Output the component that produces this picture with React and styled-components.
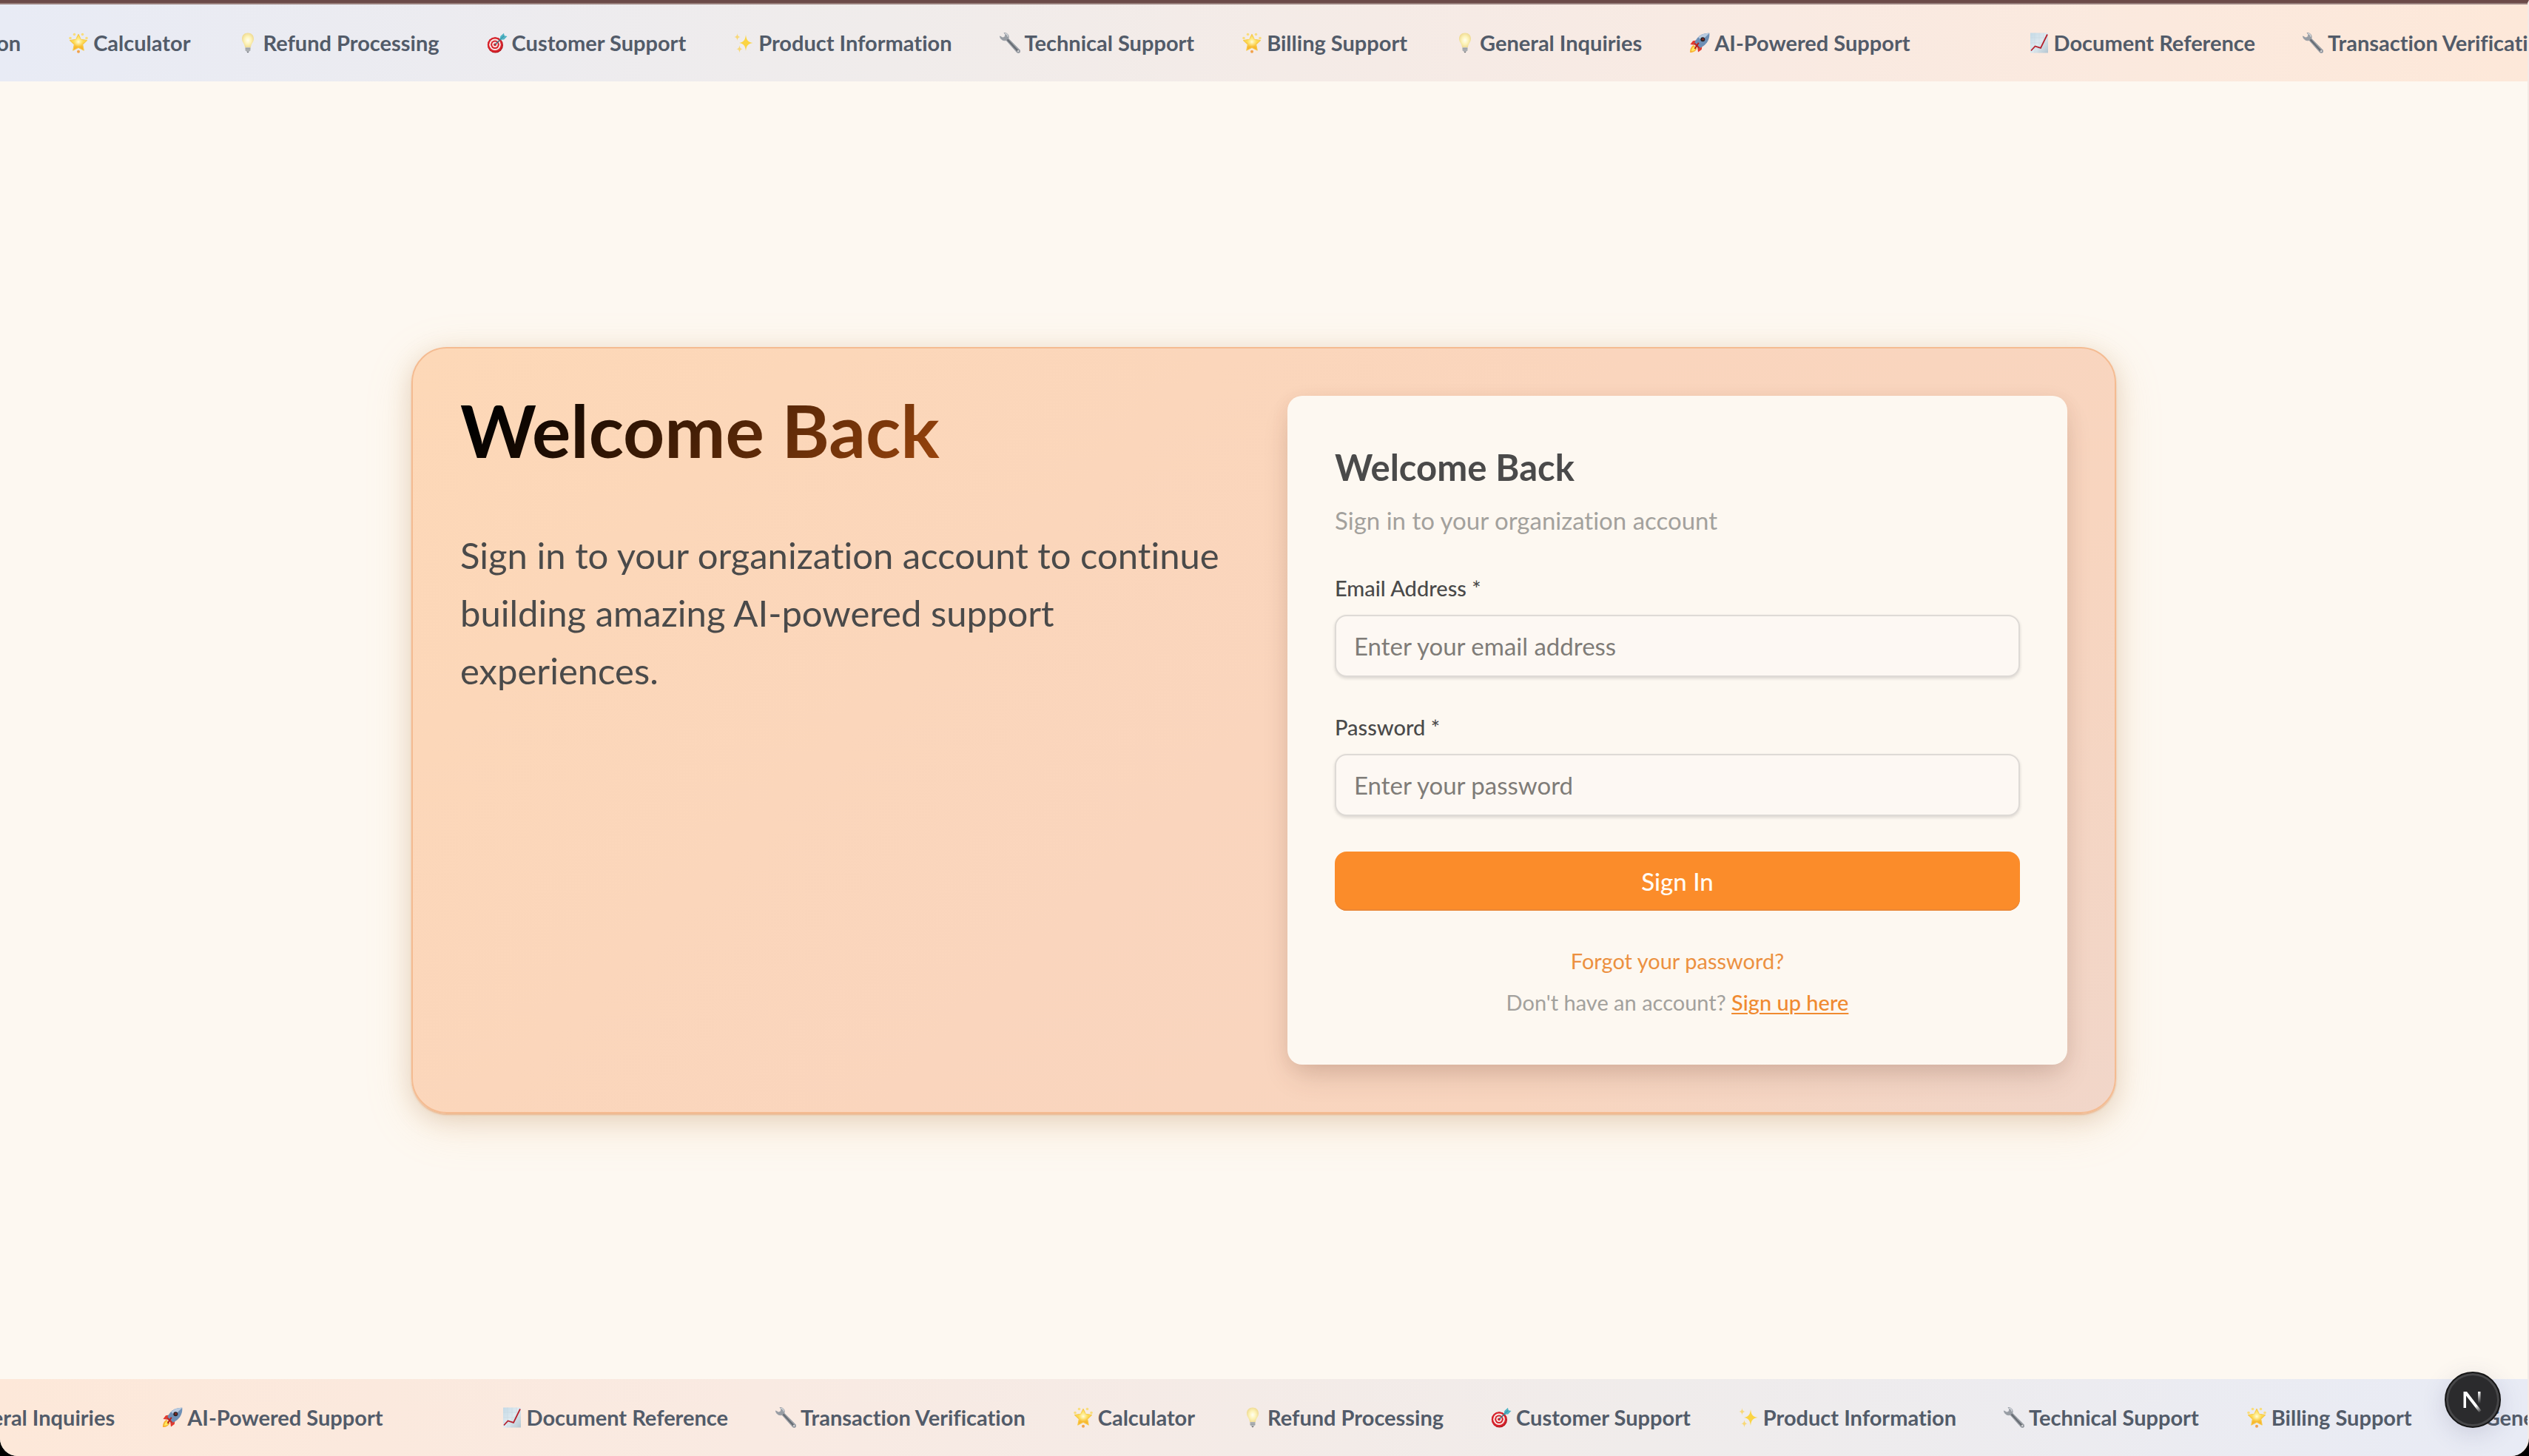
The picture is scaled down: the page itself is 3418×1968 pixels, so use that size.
import React from "react";
import styled, { createGlobalStyle } from "styled-components";

const GlobalStyle = createGlobalStyle`
  *, *::before, *::after { box-sizing: border-box; }
  html { background: #000; }
  body {
    margin: 0;
    background: #000;
    font-family: Lato, "Noto Sans", sans-serif;
    font-variant-ligatures: none;
  }
  h1, h2, p { margin: 0; }
`;

const Page = styled.div`
  min-height: 100vh;
  display: flex;
  flex-direction: column;
  overflow: hidden;
  background: #fdf8f1;
  border-top: 4px solid #6b4a48;
  border-right: 2px solid #f3ebe6;
  border-radius: 0 0 24px 24px;
`;

const TopRule = styled.div`
  height: 2px;
  background: #98807c;
`;

/* ---------- marquee ---------- */

const Marquee = styled.section`
  display: flex;
  overflow: hidden;
  padding: 32px 0;
  background: linear-gradient(${(p) => (p.$reverse ? "270deg" : "90deg")}, #e8ebf5 0%, #f0eceb 35%, #f9eae2 70%, #fde8d9 100%);
`;

const Track = styled.div`
  display: flex;
  flex: none;
  transform: translateX(-${(p) => p.$shift}px);
`;

const Group = styled.ul`
  display: flex;
  flex: none;
  gap: 64px;
  margin: 0;
  padding: 0 160px 0 0;
  list-style: none;
`;

const Topic = styled.li`
  display: flex;
  align-items: center;
  gap: 6px;
  white-space: nowrap;
  font-size: 29px;
  line-height: 40px;
  font-weight: 700;
  color: #525b69;
`;

const Glyph = styled.svg`
  width: 28px;
  height: 28px;
  flex: none;
`;

function Star() {
  return (
    <Glyph viewBox="0 0 28 28" aria-hidden="true">
      <defs>
        <linearGradient id="star" x1="0" y1="0" x2="0" y2="1">
          <stop offset="0" stopColor="#fde97a" />
          <stop offset="0.5" stopColor="#fdd84a" />
          <stop offset="1" stopColor="#f5a623" />
        </linearGradient>
        <radialGradient id="starCore">
          <stop offset="0" stopColor="#fffde0" />
          <stop offset="1" stopColor="#fff3a0" stopOpacity="0" />
        </radialGradient>
      </defs>
      <g fill="#f9dd7c">
        <circle cx="8.5" cy="2.5" r="1.8" />
        <circle cx="19.5" cy="2.5" r="1.8" />
        <circle cx="3" cy="7.5" r="1.8" />
        <circle cx="25" cy="7.5" r="1.8" />
      </g>
      <circle cx="14" cy="25.8" r="2" fill="#f2a24a" />
      <path
        d="M14 2.5l3.4 6.9 8 1.1-5.8 5.5 1.6 8-7.2-3.8L6.8 24l1.6-8L2.6 10.5l8-1.1z"
        fill="url(#star)"
        stroke="#f7c948"
        strokeWidth="1.2"
        strokeLinejoin="round"
      />
      <circle cx="14" cy="12.5" r="7" fill="url(#starCore)" />
    </Glyph>
  );
}

function Bulb() {
  return (
    <Glyph viewBox="0 0 28 28" aria-hidden="true">
      <defs>
        <radialGradient id="bulb" cx="0.5" cy="0.5">
          <stop offset="0" stopColor="#fffef2" />
          <stop offset="0.55" stopColor="#fdf3b8" />
          <stop offset="1" stopColor="#f0dc96" />
        </radialGradient>
      </defs>
      <path d="M14 .5c-4.9 0-8 3.4-8 7.7 0 5 3.5 6.4 4.2 12.2h7.6c.7-5.8 4.2-7.2 4.2-12.2 0-4.300-3.100-7.700-8-7.700z" fill="url(#bulb)" />
      <path d="M10.6 20h6.8v4.2l-1.7 1.5h-3.4l-1.7-1.5z" fill="#b9bcc0" />
      <path d="M10.6 21.6h6.8M10.6 23.6h6.8" stroke="#8b8f94" strokeWidth=".8" />
      <path d="M12.3 25.7h3.4L14 27.5z" fill="#5d6166" />
    </Glyph>
  );
}

function Target() {
  return (
    <Glyph viewBox="0 0 28 28" aria-hidden="true">
      <circle cx="11.5" cy="17" r="10.5" fill="#a9141c" />
      <circle cx="11" cy="16.5" r="10.2" fill="#d8232c" />
      <circle cx="11" cy="16.3" r="7.8" fill="#f7e9e6" />
      <circle cx="11" cy="16.3" r="5.8" fill="#d8232c" />
      <circle cx="11" cy="16.3" r="3.7" fill="#f7e9e6" />
      <circle cx="11" cy="16.3" r="1.9" fill="#d8232c" />
      <path d="M11 16.3L22 6" stroke="#3e6f7d" strokeWidth="1.5" />
      <path d="M17.5 9.8l.8-4.8L23 .8l.6 3.4 3.9.7-4.3 4.6z" fill="#4fb3c4" />
      <path d="M17.5 9.8l6-5.6" stroke="#2d8496" strokeWidth=".9" />
    </Glyph>
  );
}

function Sparkles() {
  return (
    <Glyph viewBox="0 0 28 28" aria-hidden="true">
      <path d="M17 3c.9 7 2.3 9.5 9.5 11-7.2 1.5-8.6 4-9.5 11-.9-7-2.3-9.5-9-11 6.7-1.5 8.1-4 9-11z" fill="#fbd443" />
      <path d="M5.5 1c.5 3.4 1.2 4.4 4.2 5-3 .6-3.7 1.6-4.2 5-.5-3.4-1.2-4.4-4.2-5 3-.6 3.7-1.6 4.2-5z" fill="#f8d878" />
      <path d="M8.5 17c.5 3.5 1.2 4.6 4.2 5.2-3 .6-3.7 1.7-4.2 5.2-.5-3.5-1.2-4.6-4.2-5.2 3-.6 3.7-1.7 4.2-5.2z" fill="#f8d878" />
    </Glyph>
  );
}

function Wrench() {
  return (
    <Glyph viewBox="0 0 28 28" aria-hidden="true">
      <path
        d="M6 .4C9.5.2 12 2.5 12.2 5.4c.1 1.1-.1 1.9-.4 2.6l15.4 15.5c2.2 2.5-1.2 5.7-3.7 3.5L8.9 10.5C5.2 11.5 1 9.5.4 4.9L4.3 7 7.3 5.6 7.6 2.6z"
        fill="#989da4"
        stroke="#989da4"
        strokeWidth=".8"
      />
      <path d="M10.5 9.5l14.5 15.700" stroke="#666b72" strokeWidth="2" />
      <path d="M7.200 1.400c2.400.4 3.700 2.200 3.700 4.300" stroke="#d5d9dd" strokeWidth="1.200" fill="none" />
      <circle cx="25" cy="25.1" r="1" fill="#f0eeec" />
    </Glyph>
  );
}

function Rocket() {
  return (
    <Glyph viewBox="0 0 28 28" aria-hidden="true">
      <path d="M1 27c0-5 1.8-8.5 5-10l4.5 4.5C9 25 6 27 1 27z" fill="#f9b233" />
      <path d="M3 25c.3-3 1.5-5 3.5-6l2.5 2.5C8 24 6 25 3 25z" fill="#fdea5c" />
      <path d="M10.5 10.5L5 11.2 1.5 16l6 .8zM17.5 17.5l-.7 5.5L12 26.5l-.8-6z" fill="#e23a2e" />
      <path d="M27.3.7c.4 6.5-1.7 11.8-6.3 16-2.3 2-5.5 3.8-8.5 4.8l-6-6c1-3 2.8-6.2 4.8-8.5C15.500 2.400 20.800.3 27.300.7z" fill="#6e8fb5" />
      <path d="M27.3.7C21 .3 16 2.6 12.3 6.2L17 11z" fill="#b9cbe0" />
      <path d="M6.5 15.5l6 6 2.2-1-7.2-7.2z" fill="#c92a22" />
      <circle cx="18.3" cy="9.3" r="3" fill="#2a2224" />
      <circle cx="18.6" cy="9" r="1.5" fill="#8b2a24" />
      <path d="M12.8 13.8L7.5 22" stroke="#b3201c" strokeWidth="2" />
    </Glyph>
  );
}

function Chart() {
  return (
    <Glyph viewBox="0 0 28 28" aria-hidden="true">
      <defs>
        <linearGradient id="sheet" x1="0" y1="0" x2="1" y2="1">
          <stop offset="0" stopColor="#c3d9e6" />
          <stop offset="0.5" stopColor="#e0eaf0" />
          <stop offset="1" stopColor="#b3c5d0" />
        </linearGradient>
      </defs>
      <rect x="2" y=".5" width="24" height="27" fill="url(#sheet)" />
      <path d="M8 .5v27M14 .5v27M20 .5v27M2 7h24M2 14h24M2 21h24" stroke="#c6d4dc" strokeWidth=".5" />
      <path d="M3 24.5l5.5-6 7.5 2.3L25 2.5" fill="none" stroke="#b5202c" strokeWidth="1.8" />
    </Glyph>
  );
}

const topics = [
  [Chart, "Document Reference"],
  [Wrench, "Transaction Verification"],
  [Star, "Calculator"],
  [Bulb, "Refund Processing"],
  [Target, "Customer Support"],
  [Sparkles, "Product Information"],
  [Wrench, "Technical Support"],
  [Star, "Billing Support"],
  [Bulb, "General Inquiries"],
  [Rocket, "AI-Powered Support"],
];

function TopicMarquee({ shift, reverse }) {
  return (
    <Marquee $reverse={reverse} aria-label="Support topics">
      <Track $shift={shift}>
        {[0, 1].map((copy) => (
          <Group key={copy} aria-hidden={copy === 1}>
            {topics.map(([Icon, name]) => (
              <Topic key={name}>
                <Icon />
                {name}
              </Topic>
            ))}
          </Group>
        ))}
      </Track>
    </Marquee>
  );
}

/* ---------- sign-in panel ---------- */

const Main = styled.main`
  flex: 1;
  display: flex;
  align-items: center;
  justify-content: center;
  padding: 64px;
`;

const Panel = styled.div`
  width: 100%;
  max-width: 2304px;
  display: grid;
  grid-template-columns: 1fr 1fr;
  gap: 64px;
  padding: 64px;
  border: 2px solid #f4bb91;
  border-radius: 48px;
  background: linear-gradient(135deg, #fdd8b7 0%, #fad5bd 50%, #f8d5bf 75%, #f1d6c9 100%);
  box-shadow:
    0 2px 2px rgba(235, 150, 90, 0.5),
    0 8px 32px rgba(150, 110, 60, 0.22),
    0 16px 64px rgba(235, 180, 120, 0.2);
`;

const Intro = styled.div`
  display: flex;
  flex-direction: column;
  gap: 84px;
`;

const Title = styled.h1`
  font-size: 98px;
  line-height: 92px;
  font-weight: 700;
  color: transparent;
  background: linear-gradient(135deg, #000 5%, #f46d15 100%);
  background-clip: text;
  -webkit-background-clip: text;
`;

const Lead = styled.p`
  font-size: 49px;
  line-height: 78px;
  color: #4a4a4a;
`;

const Card = styled.div`
  display: flex;
  flex-direction: column;
  gap: 48px;
  padding: 64px;
  border-radius: 20px;
  background: #fdf8f1;
  box-shadow:
    0 20px 40px -8px rgba(90, 50, 40, 0.2),
    0 4px 24px rgba(120, 70, 40, 0.08);
`;

const CardHeader = styled.div`
  display: flex;
  flex-direction: column;
  gap: 16px;
`;

const CardTitle = styled.h2`
  font-size: 49px;
  line-height: 64px;
  font-weight: 700;
  color: #4a4a4a;
`;

const CardNote = styled.p`
  font-size: 33px;
  line-height: 48px;
  color: #a3a19d;
`;

const Form = styled.form`
  display: flex;
  flex-direction: column;
  gap: 48px;
`;

const Field = styled.div`
  display: flex;
  flex-direction: column;
  gap: 16px;
`;

const Label = styled.label`
  font-size: 29px;
  line-height: 40px;
  font-weight: 500;
  color: #4a4a4a;
`;

const Input = styled.input`
  width: 100%;
  height: 84px;
  padding: 0 24px;
  border: 2px solid #dedad6;
  border-radius: 16px;
  background: #fdf8f3;
  box-shadow: 0 2px 4px rgba(0, 0, 0, 0.14);
  font: 400 33px/48px Lato, "Noto Sans", sans-serif;
  color: #4a4a4a;

  &::placeholder {
    color: #7f7c78;
    opacity: 1;
  }
`;

const SubmitButton = styled.button`
  height: 80px;
  border: 0;
  border-radius: 16px;
  background: #fb8c2a;
  box-shadow: inset 0 -2px 0 #ea8838;
  font: 500 33px/48px Lato, "Noto Sans", sans-serif;
  color: #fffaf4;
  cursor: pointer;
`;

const CardFooter = styled.div`
  display: flex;
  flex-direction: column;
  align-items: center;
  gap: 16px;
  font-size: 29px;
  line-height: 40px;
  color: #a3a19d;
`;

const ForgotLink = styled.a`
  color: #ec9040;
  text-decoration: none;
`;

const SignUpLink = styled.a`
  font-weight: 500;
  color: #f08a30;
  text-decoration: underline;
  text-decoration-thickness: 2px;
  text-underline-offset: 3px;
`;

/* ---------- dev tools badge ---------- */

const DevBadge = styled.button`
  position: fixed;
  right: 38px;
  bottom: 38px;
  width: 76px;
  height: 76px;
  padding: 0;
  border: 2px solid #161616;
  border-radius: 50%;
  background: #2b2b2d;
  box-shadow:
    inset 0 0 0 3px #474749,
    0 8px 32px rgba(80, 80, 120, 0.18);
`;

const BadgeMark = styled.svg`
  display: block;
  width: 72px;
  height: 72px;
`;

export default function App() {
  return (
    <>
      <GlobalStyle />
      <Page>
        <TopRule />
        <TopicMarquee shift={680} />
        <Main>
          <Panel>
            <Intro>
              <Title>Welcome Back</Title>
              <Lead>
                Sign in to your organization account to continue building amazing AI-powered support experiences.
              </Lead>
            </Intro>
            <Card>
              <CardHeader>
                <CardTitle>Welcome Back</CardTitle>
                <CardNote>Sign in to your organization account</CardNote>
              </CardHeader>
              <Form onSubmit={(event) => event.preventDefault()}>
                <Field>
                  <Label htmlFor="email">Email Address *</Label>
                  <Input id="email" type="email" placeholder="Enter your email address" required />
                </Field>
                <Field>
                  <Label htmlFor="password">Password *</Label>
                  <Input id="password" type="password" placeholder="Enter your password" required />
                </Field>
                <SubmitButton type="submit">Sign In</SubmitButton>
              </Form>
              <CardFooter>
                <ForgotLink href="#forgot">Forgot your password?</ForgotLink>
                <p>
                  Don't have an account? <SignUpLink href="#signup">Sign up here</SignUpLink>
                </p>
              </CardFooter>
            </Card>
          </Panel>
        </Main>
        <TopicMarquee shift={2744} reverse />
      </Page>
      <DevBadge type="button" aria-label="Open Next.js Dev Tools">
        <BadgeMark viewBox="0 0 72 72" aria-hidden="true">
          <defs>
            <linearGradient id="markSlant" x1="24" y1="24" x2="47" y2="53" gradientUnits="userSpaceOnUse">
              <stop offset="0.7" stopColor="#fff" />
              <stop offset="1" stopColor="#fff" stopOpacity="0" />
            </linearGradient>
            <linearGradient id="markStem" x1="0" y1="25" x2="0" y2="41" gradientUnits="userSpaceOnUse">
              <stop offset="0" stopColor="#fff" />
              <stop offset="1" stopColor="#fff" stopOpacity="0" />
            </linearGradient>
          </defs>
          <path d="M23.5 25h4.5L47.5 50.5l-3 2.500L27 30.500V47h-3.500z" fill="url(#markSlant)" />
          <path d="M43 25h3.500v16H43z" fill="url(#markStem)" />
        </BadgeMark>
      </DevBadge>
    </>
  );
}
